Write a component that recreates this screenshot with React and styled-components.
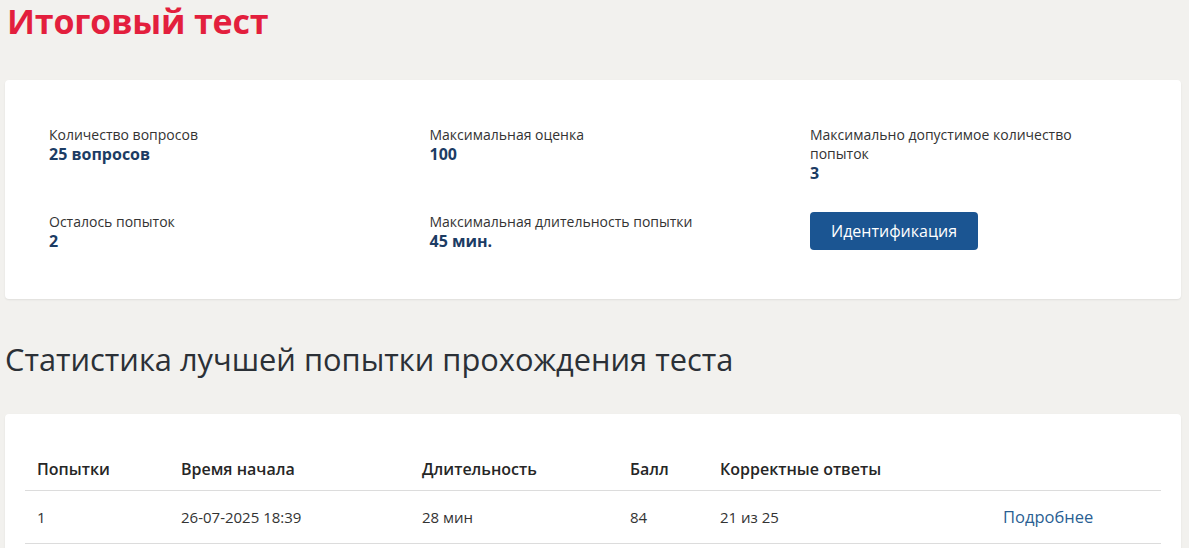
import React from "react";
import styled, { createGlobalStyle } from "styled-components";

const GlobalStyle = createGlobalStyle`
  body {
    margin: 0;
    background: #f2f1ee;
    font-family: "Open Sans", "Noto Sans", sans-serif;
    color: #333;
  }
`;

const Page = styled.div`
  padding: 1px 8px 0 5px;
`;

const Title = styled.h1`
  margin: 0 0 39px 2px;
  font-size: 34px;
  line-height: 40px;
  font-weight: 700;
  color: #e31f3d;
  letter-spacing: -0.2px;
`;

const Card = styled.div`
  background: #fff;
  border-radius: 4px;
  box-shadow: 0 1px 2px rgba(0, 0, 0, 0.08);
  padding: ${({ $padding }) => $padding};
`;

const InfoGrid = styled.div`
  display: grid;
  grid-template-columns: repeat(3, 380.5px);
  row-gap: 28px;
`;

const InfoItem = styled.div`
  display: flex;
  flex-direction: column;
  align-items: flex-start;
  max-width: 290px;
`;

const Label = styled.div`
  font-size: 14px;
  line-height: 19px;
  color: #333;
`;

const Value = styled.div`
  font-size: 16px;
  line-height: 21px;
  font-weight: 700;
  color: #1c3c64;
`;

const Button = styled.button`
  height: 38px;
  padding: 0 21px;
  border: none;
  border-radius: 4px;
  background: #1b5592;
  color: #fff;
  font-family: inherit;
  font-size: 16px;
  cursor: pointer;
`;

const Heading = styled.h2`
  margin: 40px 0 35px;
  font-size: 30.8px;
  line-height: 40px;
  font-weight: 400;
  color: #2b3036;
`;

const Table = styled.table`
  width: 100%;
  border-collapse: collapse;
  table-layout: fixed;
  font-size: 15px;
  color: #333;
`;

const Th = styled.th`
  text-align: left;
  font-size: 16px;
  font-weight: 600;
  color: #262626;
  padding: 11px 12px 10px;
  line-height: 21px;
  border-bottom: 1px solid #dcdcdc;
`;

const Td = styled.td`
  padding: 15px 12px 15px;
  line-height: 22px;
  border-bottom: 1px solid #dcdcdc;
`;

const Link = styled.a`
  color: #2a5f93;
  text-decoration: none;
  font-size: 16.5px;
`;

const info = [
  { label: "Количество вопросов", value: "25 вопросов" },
  { label: "Максимальная оценка", value: "100" },
  { label: "Максимально допустимое количество попыток", value: "3" },
  { label: "Осталось попыток", value: "2" },
  { label: "Максимальная длительность попытки", value: "45 мин." },
];

const columns = [
  { title: "Попытки", width: 144 },
  { title: "Время начала", width: 241 },
  { title: "Длительность", width: 208 },
  { title: "Балл", width: 90 },
  { title: "Корректные ответы", width: 283 },
  { title: "", width: null },
];

const rows = [["1", "26-07-2025 18:39", "28 мин", "84", "21 из 25"]];

export default function App() {
  return (
    <Page>
      <GlobalStyle />
      <Title>Итоговый тест</Title>
      <Card $padding="45px 44px 47px">
        <InfoGrid>
          {info.map((item) => (
            <InfoItem key={item.label}>
              <Label>{item.label}</Label>
              <Value>{item.value}</Value>
            </InfoItem>
          ))}
          <InfoItem>
            <Button>Идентификация</Button>
          </InfoItem>
        </InfoGrid>
      </Card>
      <Heading>Статистика лучшей попытки прохождения теста</Heading>
      <Card $padding="34px 20px 30px">
        <Table>
          <colgroup>
            {columns.map((c, i) => (
              <col key={i} style={c.width ? { width: c.width } : undefined} />
            ))}
          </colgroup>
          <thead>
            <tr>
              {columns.map((c, i) => (
                <Th key={i}>{c.title}</Th>
              ))}
            </tr>
          </thead>
          <tbody>
            {rows.map((r, i) => (
              <tr key={i}>
                {r.map((cell, j) => (
                  <Td key={j}>{cell}</Td>
                ))}
                <Td>
                  <Link href="#">Подробнее</Link>
                </Td>
              </tr>
            ))}
          </tbody>
        </Table>
      </Card>
    </Page>
  );
}
